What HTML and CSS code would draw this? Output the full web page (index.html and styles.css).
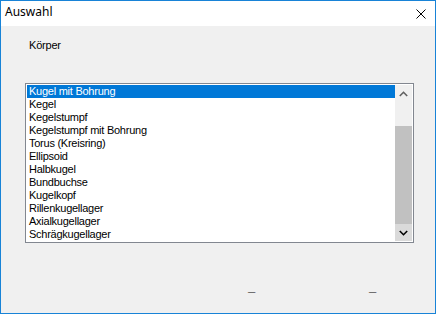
FILE: index.html
```html
<!DOCTYPE html>
<html lang="de">
<head>
    <meta charset="UTF-8">
    <meta name="viewport" content="width=device-width, initial-scale=1.0">
    <title>Auswahl</title>
    <link rel="stylesheet" href="styles.css">
</head>
<body>
    <div class="window">
        <!-- Titelleiste -->
        <div class="titlebar">
            <span class="title">Auswahl</span>
            <span class="close">
                <svg width="10" height="10" viewBox="0 0 10 10">
                    <path d="M0.5 0.5 L9.5 9.5 M9.5 0.5 L0.5 9.5" stroke="#000" stroke-width="1" fill="none"/>
                </svg>
            </span>
        </div>

        <div class="content">
            <div class="caption">Körper</div>

            <div class="listbox">
                <ul class="items">
                    <li class="selected">Kugel mit Bohrung</li>
                    <li>Kegel</li>
                    <li>Kegelstumpf</li>
                    <li>Kegelstumpf mit Bohrung</li>
                    <li>Torus (Kreisring)</li>
                    <li>Ellipsoid</li>
                    <li>Halbkugel</li>
                    <li>Bundbuchse</li>
                    <li>Kugelkopf</li>
                    <li>Rillenkugellager</li>
                    <li>Axialkugellager</li>
                    <li>Schrägkugellager</li>
                </ul>
                <div class="scrollbar">
                    <div class="arrow up">
                        <svg width="9" height="6" viewBox="0 0 9 6">
                            <path d="M0.8 5 L4.5 1.3 L8.2 5" stroke="#606060" stroke-width="1.6" fill="none"/>
                        </svg>
                    </div>
                    <div class="track"><div class="thumb"></div></div>
                    <div class="arrow down">
                        <svg width="9" height="6" viewBox="0 0 9 6">
                            <path d="M0.8 1 L4.5 4.7 L8.2 1" stroke="#000" stroke-width="1.6" fill="none"/>
                        </svg>
                    </div>
                </div>
            </div>

            <div class="actions">
                <button>_</button>
                <button>_</button>
            </div>
        </div>
    </div>
</body>
</html>
```

FILE: styles.css
```css
html, body {
    margin: 0;
    padding: 0;
}

body {
    font-family: "Liberation Sans", Arial, sans-serif;
    font-size: 11px;
    color: #000;
}

.window {
    width: 436px;
    height: 314px;
    box-sizing: border-box;
    border: 1px solid #1883d7;
    background: #f0f0f0;
    display: flex;
    flex-direction: column;
}

/* Titelleiste */
.titlebar {
    height: 25px;
    background: #fff;
    display: flex;
    justify-content: space-between;
    align-items: flex-start;
    padding: 0 9px 0 4px;
}

.title {
    font-family: "Noto Sans", "Open Sans", sans-serif;
    font-size: 12px;
    line-height: 16px;
    padding-top: 3px;
}

.close {
    display: flex;
    margin-top: 8px;
}

.content {
    flex: 1;
    padding: 0 22px 0 24px;
}

.caption {
    margin-top: 13px;
    padding-left: 4px;
    line-height: 13px;
    letter-spacing: -0.2px;
}

/* Liste */
.listbox {
    margin-top: 31px;
    width: 389px;
    height: 160px;
    box-sizing: border-box;
    border: 1px solid #828790;
    background: #fff;
    padding: 1px;
    display: flex;
}

.items {
    flex: 1;
    list-style: none;
    margin: 0;
    padding: 0;
}

.items li {
    height: 13px;
    line-height: 13px;
    padding-left: 2px;
    white-space: nowrap;
    letter-spacing: -0.25px;
}

.items li.selected {
    background: #0078d7;
    color: #fff;
}

.scrollbar {
    width: 17px;
    display: flex;
    flex-direction: column;
    background: #f0f0f0;
}

.arrow {
    height: 17px;
    display: flex;
    align-items: center;
    justify-content: center;
}

.arrow.down {
    background: #dadada;
}

.track {
    flex: 1;
    display: flex;
    flex-direction: column;
    justify-content: flex-end;
}

.thumb {
    height: 98px;
    background: #c1c1c1;
}

/* Knöpfe unten */
.actions {
    display: flex;
    justify-content: flex-end;
    gap: 46px;
    margin-top: 32px;
    padding-right: 3px;
}

.actions button {
    width: 75px;
    height: 23px;
    padding: 0;
    border: 0;
    background: transparent;
    font-family: "Liberation Sans", Arial, sans-serif;
    font-size: 13px;
    font-weight: bold;
    line-height: 13px;
    color: #000;
}
```
